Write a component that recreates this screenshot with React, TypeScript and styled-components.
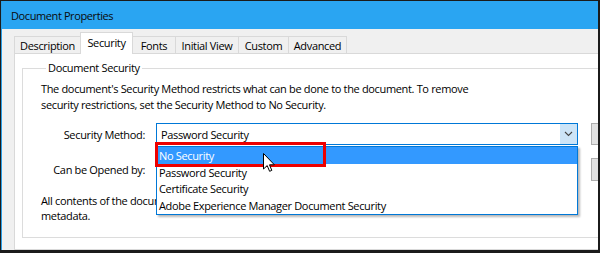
import styled, { createGlobalStyle } from 'styled-components'

const GlobalStyle = createGlobalStyle`
  html, body {
    margin: 0;
    padding: 0;
    background: #1b1b1b;
  }
  * {
    box-sizing: border-box;
  }
`

const font = `"Open Sans", "Noto Sans", sans-serif`

const Frame = styled.div`
  width: 600px;
  height: 253px;
  padding: 1px 2px 3px 1px;
  background: #1b1b1b;
  font-family: ${font};
  font-size: 11px;
  letter-spacing: -0.34px;
  color: #000;
  overflow: hidden;
`

const Window = styled.div`
  height: 100%;
  display: flex;
  flex-direction: column;
  background: #f0f0f0;
  border-left: 1px solid #2b9fe6;
`

const TitleBar = styled.div`
  height: 28px;
  flex: none;
  display: flex;
  align-items: center;
  padding-left: 9px;
  background: #2aa5f2;
  font-size: 11px;
  letter-spacing: -0.4px;
  color: #0a0a0a;
`

const Body = styled.div`
  flex: 1;
  display: flex;
  flex-direction: column;
  padding: 4px 0 0 12px;
  min-height: 0;
`

const TabRow = styled.div`
  display: flex;
  align-items: flex-end;
  height: 21px;
  flex: none;
  position: relative;
  z-index: 1;
  margin-bottom: -1px;
`

const Tab = styled.div<{ $active?: boolean; $w: number }>`
  width: ${({ $w }) => $w}px;
  height: ${({ $active }) => ($active ? 22 : 18)}px;
  display: flex;
  align-items: center;
  justify-content: center;
  padding-bottom: ${({ $active }) => ($active ? 3 : 0)}px;
  background: ${({ $active }) => ($active ? '#fff' : '#f0f0f0')};
  border: 1px solid #d9d9d9;
  border-bottom: ${({ $active }) => ($active ? 'none' : '1px solid #d9d9d9')};
  margin-left: -1px;
  &:first-child {
    margin-left: 0;
  }
`

const Panel = styled.div`
  flex: 1;
  position: relative;
  background: #fff;
  border: 1px solid #d9d9d9;
  border-right: none;
  padding: 7px 0 3px 7px;
  overflow: hidden;
`

const Group = styled.fieldset`
  margin: 0;
  width: 700px;
  height: 177px;
  border: 1px solid #dcdcdc;
  padding: 6px 0 0 18px;
`

const Legend = styled.legend`
  padding: 0 2px;
  margin-left: 5px;
  line-height: 14px;
`

const Para = styled.p`
  margin: 0;
  line-height: 16px;
  white-space: nowrap;
`

const Form = styled.div`
  display: grid;
  grid-template-columns: 104px 422px 40px;
  column-gap: 11px;
  row-gap: 13px;
  margin-top: 10px;
  align-items: center;
`

const Label = styled.div`
  text-align: right;
`

const Combo = styled.div`
  position: relative;
  height: 22px;
  display: flex;
  align-items: center;
  border: 1px solid #0078d7;
  background: #fff;
  padding-left: 4px;
`

const ComboArrow = styled.div`
  position: absolute;
  right: 0;
  top: 0;
  bottom: 0;
  width: 17px;
  background: #cce4f7;
  display: flex;
  align-items: center;
  justify-content: center;
`

const SideButton = styled.div<{ $h: number }>`
  height: ${({ $h }) => $h}px;
  margin-left: 2px;
  background: #e1e1e1;
  border: 1px solid #adadad;
`

const Blank = styled.div``

const Note = styled.p`
  margin: 12px 0 0;
  line-height: 15px;
  white-space: nowrap;
`

const DropList = styled.div`
  position: absolute;
  left: 141px;
  top: 92px;
  width: 422px;
  height: 69px;
  background: #fff;
  border: 1px solid #0078d7;
  box-shadow: 2px 2px 2px rgba(0, 0, 0, 0.28);
  z-index: 2;
`

const Option = styled.div<{ $hot?: boolean }>`
  height: 16.75px;
  display: flex;
  align-items: center;
  padding-left: 2px;
  background: ${({ $hot }) => ($hot ? '#3399ff' : 'transparent')};
  color: ${({ $hot }) => ($hot ? '#fff' : '#000')};
`

const Highlight = styled.div`
  position: absolute;
  left: 140px;
  top: 88px;
  width: 171px;
  height: 25px;
  border: 3px solid #ee0000;
  z-index: 3;
`

const Cursor = styled.svg`
  position: absolute;
  left: 248px;
  top: 99px;
  z-index: 4;
`

const tabs: [string, number][] = [
  ['Description', 67],
  ['Security', 53],
  ['Fonts', 44],
  ['Initial View', 64],
  ['Custom', 51],
  ['Advanced', 59],
]

const options = [
  'No Security',
  'Password Security',
  'Certificate Security',
  'Adobe Experience Manager Document Security',
]

export default function App() {
  return (
    <>
      <GlobalStyle />
      <Frame>
        <Window>
          <TitleBar>Document Properties</TitleBar>
          <Body>
            <TabRow>
              {tabs.map(([name, w]) => (
                <Tab key={name} $w={w} $active={name === 'Security'}>
                  {name}
                </Tab>
              ))}
            </TabRow>
            <Panel>
              <Group>
                <Legend>Document Security</Legend>
                <Para>
                  The document's Security Method restricts what can be done to the document. To remove
                  <br />
                  security restrictions, set the Security Method to No Security.
                </Para>
                <Form>
                  <Label>Security Method:</Label>
                  <Combo>
                    Password Security
                    <ComboArrow>
                      <svg width="9" height="6" viewBox="0 0 9 6">
                        <path d="M1 1 L4.5 4.5 L8 1" fill="none" stroke="#444" strokeWidth="1.1" />
                      </svg>
                    </ComboArrow>
                  </Combo>
                  <SideButton $h={22} />
                  <Label>Can be Opened by:</Label>
                  <Blank />
                  <SideButton $h={23} />
                </Form>
                <Note>
                  All contents of the document are encrypted and search engines cannot access the
                  <br />
                  metadata.
                </Note>
              </Group>
              <DropList>
                {options.map((o, i) => (
                  <Option key={o} $hot={i === 0}>
                    {o}
                  </Option>
                ))}
              </DropList>
              <Highlight />
              <Cursor width="13" height="20" viewBox="0 0 13 20">
                <path
                  d="M0.5 0.5 L0.5 16 L4.2 12.6 L6.6 18.3 L8.8 17.4 L6.5 11.8 L11.4 11.8 Z"
                  fill="#fff"
                  stroke="#000"
                  strokeWidth="1"
                  strokeLinejoin="round"
                />
              </Cursor>
            </Panel>
          </Body>
        </Window>
      </Frame>
    </>
  )
}
